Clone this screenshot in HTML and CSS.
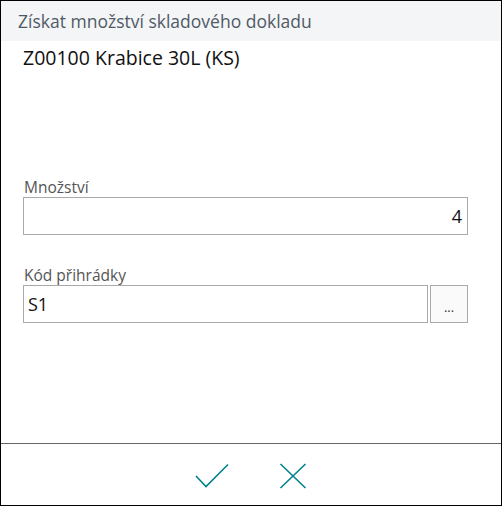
FILE: index.html
```html
<!DOCTYPE html>
<html lang="cs">
<head>
<meta charset="utf-8">
<link rel="stylesheet" href="styles.css">
</head>
<body>
<div class="dialog">
  <div class="titlebar">Získat množství skladového dokladu</div>
  <div class="content">
    <div class="item">Z00100 Krabice 30L (KS)</div>
    <div class="field field-first">
      <label class="label">Množství</label>
      <div class="input input-num">4</div>
    </div>
    <div class="field">
      <label class="label">Kód přihrádky</label>
      <div class="row">
        <div class="input input-text">S1</div>
        <div class="lookup">...</div>
      </div>
    </div>
  </div>
  <div class="footer">
    <button class="action" aria-label="OK">
      <svg width="34" height="26" viewBox="0 0 34 26"><path d="M1 13 L11 23.5 L33 1.5" fill="none" stroke="#00828a" stroke-width="1.6"/></svg>
    </button>
    <button class="action" aria-label="Zrušit">
      <svg width="28" height="26" viewBox="0 0 28 26"><path d="M1.5 1 L26.5 25 M26.5 1 L1.5 25" fill="none" stroke="#00828a" stroke-width="1.6"/></svg>
    </button>
  </div>
</div>
</body>
</html>
```
FILE: styles.css
```css
* { box-sizing: border-box; }
html, body { margin: 0; padding: 0; }
body {
  font-family: "Open Sans", "Noto Sans", "Liberation Sans", sans-serif;
  background: #fff;
}
.dialog {
  width: 502px;
  height: 506px;
  border: 1px solid #000;
  display: flex;
  flex-direction: column;
  background: #fff;
}
.titlebar {
  height: 40px;
  background: #f4f5f7;
  color: #505a66;
  font-size: 17.5px;
  line-height: 40px;
  padding-left: 17px;
}
.content {
  flex: 1;
  padding: 4px 33px 0 22px;
}
.item {
  font-size: 19.5px;
  line-height: 26px;
  color: #111;
}
.field-first { margin-top: 106px; }
.field { display: flex; flex-direction: column; margin-bottom: 30px; }
.label {
  font-size: 15.5px;
  line-height: 20px;
  color: #555;
  padding-left: 1px;
}
.input {
  height: 38px;
  border: 1px solid #a9a9a9;
  font-size: 18px;
  line-height: 36px;
  color: #111;
  padding: 0 5px 0 4px;
}
.input-num { text-align: right; }
.row { display: flex; gap: 2px; }
.input-text { flex: 1; }
.lookup {
  width: 38px;
  height: 38px;
  border: 1px solid #a9a9a9;
  background: #fafafa;
  font-size: 13px;
  line-height: 42px;
  text-align: center;
  color: #333;
}
.footer {
  height: 62px;
  border-top: 1px solid #666;
  display: flex;
  justify-content: center;
  align-items: center;
  gap: 50px;
  padding-top: 2px;
}
.action {
  background: none;
  border: 0;
  padding: 0;
  display: flex;
}
```
